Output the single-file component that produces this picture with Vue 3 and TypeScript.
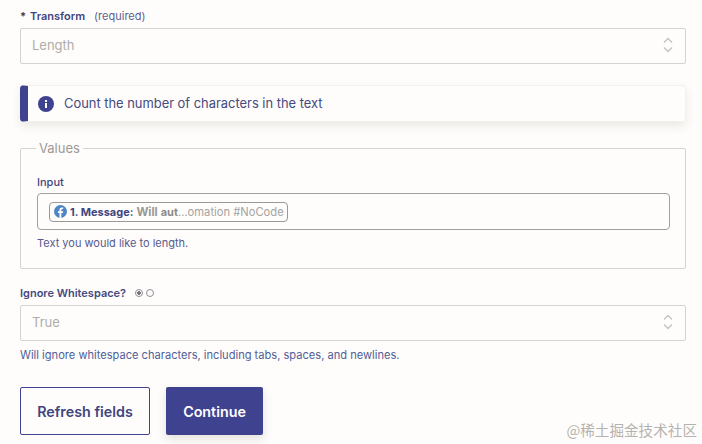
<script setup lang="ts">
const note = 'Count the number of characters in the text'
</script>

<template>
  <div class="page">
    <div class="label-row"><span class="star">*</span><b class="strong">Transform</b><span class="req">(required)</span></div>
    <div class="select">
      <span>Length</span>
      <svg class="chev" width="10" height="16" viewBox="0 0 10 16" fill="none"><path d="M1 5.500 5 1.500l4 4M1 10.500l4 4 4-4" stroke="#c4c2bd" stroke-width="1.300"/></svg>
    </div>

    <div class="alert">
      <svg class="info" width="16" height="16" viewBox="0 0 16 16"><circle cx="8" cy="8" r="8" fill="#3f438f"/><rect x="7" y="7" width="2" height="5" fill="#fffdfb"/><rect x="7" y="4" width="2" height="2" fill="#fffdfb"/></svg>
      <span>{{ note }}</span>
    </div>

    <fieldset class="values">
      <legend>Values</legend>
      <div class="input-label">Input</div>
      <div class="input">
        <div class="chip">
          <svg width="13" height="13" viewBox="0 0 14 14"><circle cx="7" cy="7" r="7" fill="#4d86c6"/><path d="M7.900 14V8.600h1.700l.3-2H7.900V5.400c0-.6.3-1 1-1h1V2.700c-.4-.1-.9-.1-1.400-.1C7 2.600 5.900 3.500 5.900 5.200v1.400H4.200v2h1.700V14z" fill="#fffdfb"/></svg>
          <b class="msg">1. Message:</b>
          <b class="will">Will</b>
          <b class="aut">aut</b><span class="rest">...omation #NoCode</span>
        </div>
      </div>
      <div class="help">Text you would like to length.</div>
    </fieldset>

    <div class="ignore-row">
      <b>Ignore Whitespace?</b>
      <span class="radio on"></span>
      <span class="radio"></span>
    </div>
    <div class="select">
      <span>True</span>
      <svg class="chev" width="10" height="16" viewBox="0 0 10 16" fill="none"><path d="M1 5.500 5 1.500l4 4M1 10.500l4 4 4-4" stroke="#c4c2bd" stroke-width="1.300"/></svg>
    </div>
    <div class="help2">Will ignore whitespace characters, including tabs, spaces, and newlines.</div>

    <div class="actions">
      <button class="btn ghost">Refresh fields</button>
      <button class="btn solid">Continue</button>
    </div>

    <div class="mark">@稀土掘金技术社区</div>
  </div>
</template>

<style>
html, body { margin: 0; background: #fffdfb; }
</style>

<style scoped>
.page {
  position: relative;
  width: 702px;
  height: 444px;
  box-sizing: border-box;
  padding: 8px 16px 0 20px;
  overflow: hidden;
  background: #fffdfb;
  font-family: Inter, "Noto Sans", sans-serif;
  color: #3f438f;
}
.label-row {
  display: flex;
  align-items: center;
  height: 15px;
  margin-bottom: 5px;
  font-size: 11px;
  color: #454a80;
}
.star { width: 10px; font-weight: 700; color: #3a3a55; }
.strong { font-weight: 600; margin-right: 9px; color: #41457f; }
.req { color: #5c5f8f; }
.select {
  display: flex;
  align-items: center;
  justify-content: space-between;
  box-sizing: border-box;
  height: 36px;
  padding: 0 12px 2px 11px;
  border: 1px solid #d6d3cf;
  border-radius: 2px;
  font-size: 13px;
  color: #aeaca8;
}
.alert {
  display: flex;
  align-items: center;
  gap: 10px;
  box-sizing: border-box;
  height: 37px;
  margin-top: 21px;
  padding-left: 16px;
  border: 1px solid #f3f1ed;
  border-left: 8px solid #3f438f;
  border-radius: 4px;
  box-shadow: 0 4px 10px rgba(60, 55, 40, 0.1);
  font-size: 12.900px;
  color: #454a80;
}
.info { flex: none; margin-left: -6px; }
.values {
  box-sizing: border-box;
  height: 129px;
  margin: 18px 0 0;
  padding: 19px 15px 0 16px;
  border: 1px solid #d6d3cf;
  border-radius: 2px;
  min-width: 0;
}
legend {
  margin-left: -1px;
  padding: 0 3px;
  font-size: 13px;
  line-height: 16px;
  color: #9b9996;
}
.input-label {
  font-size: 11px;
  font-weight: 500;
  line-height: 14px;
  color: #41457f;
}
.input {
  display: flex;
  align-items: center;
  box-sizing: border-box;
  height: 37px;
  margin-top: 4px;
  padding-left: 11px;
  border: 1px solid #a3a09c;
  border-radius: 4px;
}
.chip {
  display: flex;
  align-items: center;
  gap: 3px;
  box-sizing: border-box;
  height: 20px;
  padding: 0 3px 0 4px;
  border: 1px solid #9b9997;
  border-radius: 4px;
  font-size: 11px;
  white-space: nowrap;
}
.msg { font-weight: 700; color: #41457f; }
.will { font-weight: 700; font-size: 11.500px; color: #9a9895; }
.aut { font-weight: 700; color: #8d8b89; font-size: 11px; }
.rest { margin-left: -3px; font-size: 11.200px; color: #a5a3a0; }
.help {
  margin-top: 6px;
  font-size: 11px;
  line-height: 14px;
  color: #555a8c;
}
.ignore-row {
  display: flex;
  align-items: center;
  height: 15px;
  margin-top: 16px;
  margin-bottom: 5px;
  font-size: 11px;
  color: #454a80;
}
.ignore-row b { font-weight: 600; margin-right: 9px; }
.radio {
  box-sizing: border-box;
  width: 8px;
  height: 8px;
  margin-right: 3px;
  border: 1px solid #8d8d95;
  border-radius: 50%;
}
.radio.on { background: radial-gradient(circle, #777 0 1.800px, transparent 2px); }
.help2 {
  margin-top: 7px;
  font-size: 11.100px;
  line-height: 14px;
  color: #4f6098;
}
.actions {
  display: flex;
  gap: 16px;
  margin-top: 25px;
}
.btn {
  box-sizing: border-box;
  height: 48px;
  border-radius: 2px;
  font-family: inherit;
  font-size: 14.300px;
  font-weight: 600;
}
.ghost {
  width: 130px;
  background: transparent;
  border: 1px solid #3f438f;
  color: #41457f;
}
.solid {
  width: 97px;
  background: #3f438f;
  border: 0;
  color: #fffdfb;
  box-shadow: 0 4px 10px rgba(60, 55, 40, 0.14);
}
.mark {
  position: absolute;
  right: 5px;
  bottom: 5px;
  font-family: "Noto Sans CJK SC", sans-serif;
  font-size: 14.600px;
  line-height: 18px;
  color: #b5b3b0;
}
</style>
